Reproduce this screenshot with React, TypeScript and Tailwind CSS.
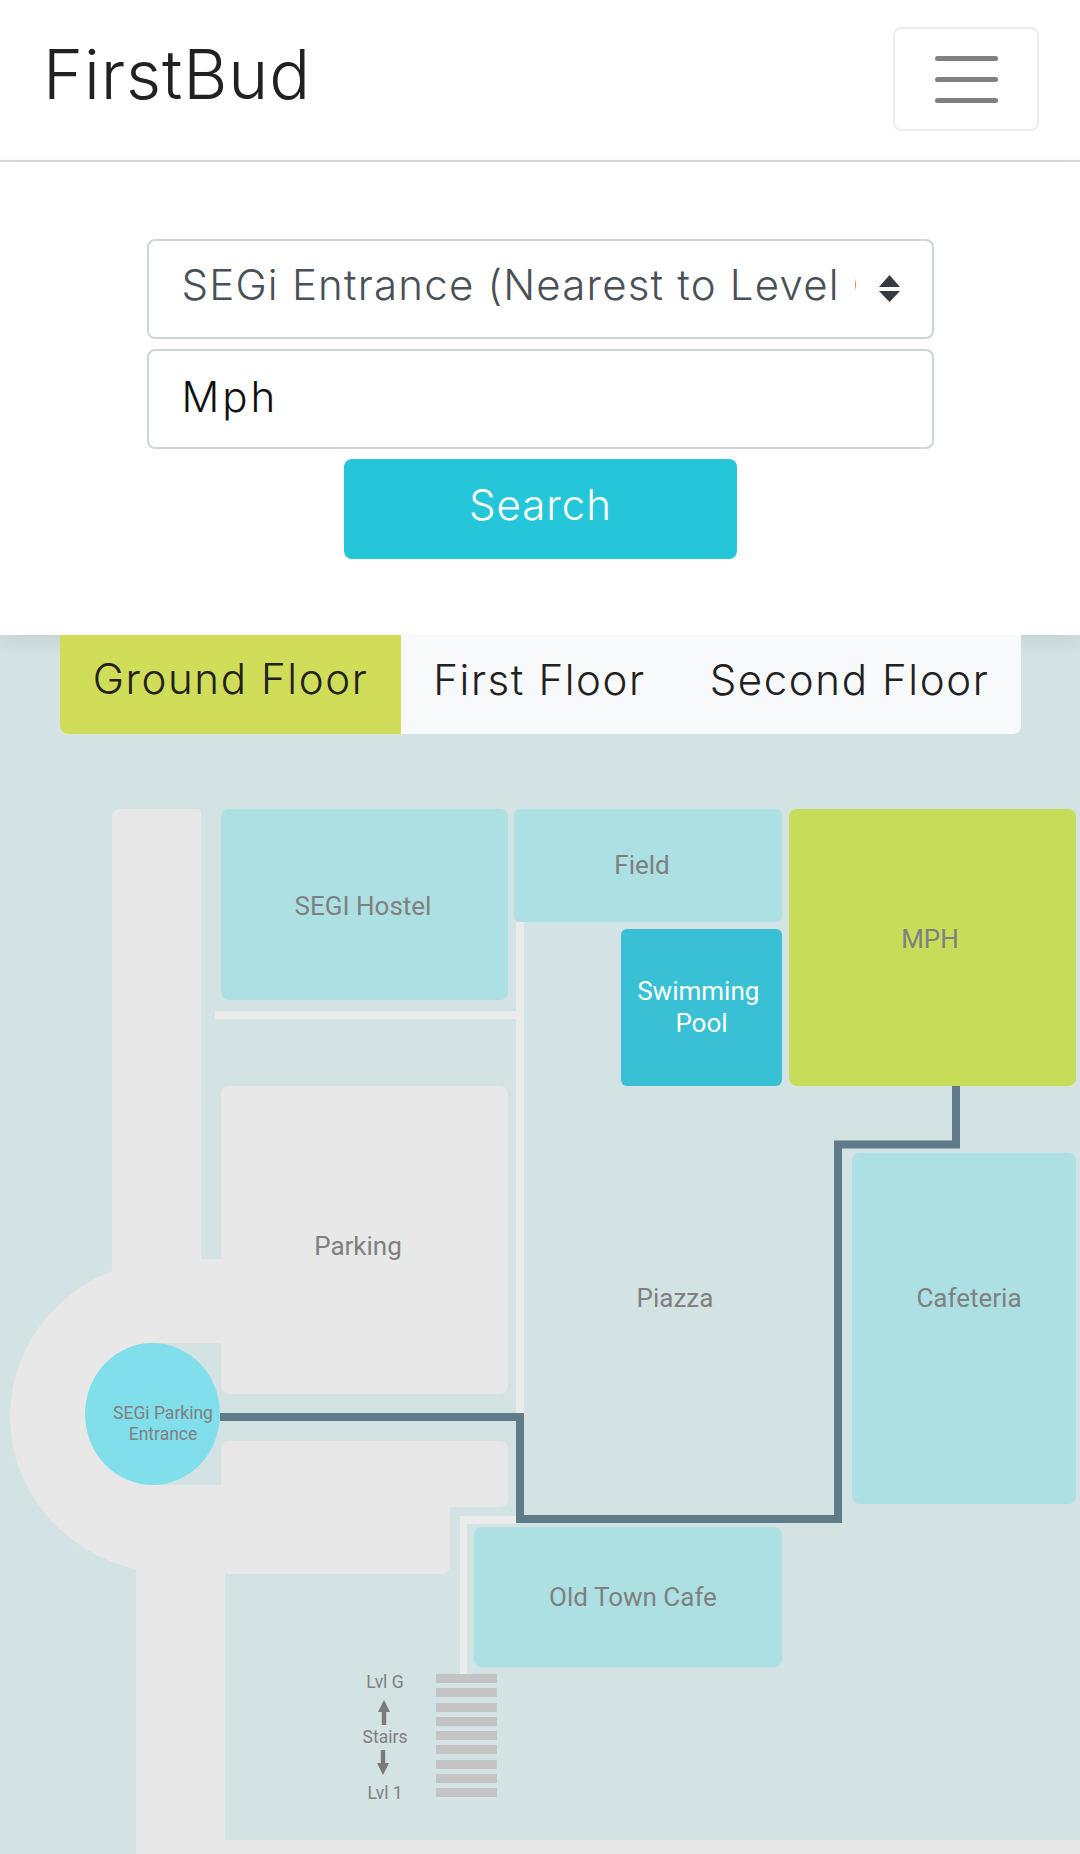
import { useState } from "react";

const stairBars = [0, 1, 2, 3, 4, 5, 6, 7, 8];

function Building({ className, children }: { className: string; children: React.ReactNode }) {
  return (
    <div className={`absolute flex items-center justify-center text-center text-[26px] text-[#808080] font-['Roboto',sans-serif] ${className}`}>
      {children}
    </div>
  );
}

function StairsLegend() {
  return (
    <div className="absolute left-[355px] top-[1037px] w-[60px] flex flex-col items-center text-[17.5px] leading-[20px] text-[#808080] font-['Roboto',sans-serif]">
      <div>Lvl G</div>
      <svg className="mt-[8px] mr-[2px]" width="18" height="26" viewBox="0 0 18 26" fill="#7a7a7a">
        <path d="M9 0 L15 12 L11.2 12 L11.2 25 L6.8 25 L6.8 12 L3 12 Z" />
      </svg>
      <div className="mt-[1px]">Stairs</div>
      <svg className="mt-[3px] mr-[4px]" width="18" height="26" viewBox="0 0 18 26" fill="#7a7a7a">
        <path d="M9 25 L15 13 L11.2 13 L11.2 0 L6.8 0 L6.8 13 L3 13 Z" />
      </svg>
      <div className="mt-[7px]">Lvl 1</div>
    </div>
  );
}

function FloorMap() {
  return (
    <>
      {/* roads */}
      <div className="absolute left-[112px] top-[174px] w-[89px] h-[461px] bg-[#e8e8e8] rounded-tl-lg rounded-tr-sm" />
      <div className="absolute left-[10px] top-[624px] w-[211px] h-[315px] bg-[#e8e8e8] rounded-[165px_0_0_165px/157px_0_0_157px]" />
      <div className="absolute left-[221px] top-[806px] w-[287px] h-[66px] bg-[#e8e8e8] rounded-lg" />
      <div className="absolute left-[221px] top-[806px] w-[229px] h-[133px] bg-[#e8e8e8] rounded-lg" />
      <div className="absolute left-[152px] top-[708px] w-[69px] h-[142px] bg-[#d3e2e3]" />
      <div className="absolute left-[136px] top-[935px] w-[89px] h-[284px] bg-[#e8e8e8]" />
      <div className="absolute left-[225px] top-[1205px] w-[855px] h-[14px] bg-[#e8e8e8]" />

      {/* walkways */}
      <div className="absolute left-[215px] top-[376px] w-[302px] h-[8px] bg-[#ebebeb]" />
      <div className="absolute left-[516px] top-[287px] w-[8px] h-[492px] bg-[#ebebeb]" />
      <div className="absolute left-[460px] top-[881px] w-[56px] h-[8px] bg-[#ebebeb]" />
      <div className="absolute left-[460px] top-[881px] w-[7px] h-[158px] bg-[#ebebeb]" />

      {/* buildings */}
      <Building className="left-[221px] top-[174px] w-[287px] h-[191px] pr-[3px] pt-[3px] bg-[#ade0e2] rounded-lg">SEGI Hostel</Building>
      <Building className="left-[514px] top-[174px] w-[268px] h-[113px] pr-[12px] bg-[#ade0e2] rounded-md">Field</Building>
      <Building className="left-[789px] top-[174px] w-[287px] h-[277px] pr-[5px] pb-[17px] bg-[#c7dd59] rounded-lg">MPH</Building>
      <Building className="left-[621px] top-[294px] w-[161px] h-[157px] pb-[2px] leading-[32px] !text-white bg-[#39c0d4] rounded-md">
        <div>
          Swimming{"\u00a0"}
          <br />
          Pool
        </div>
      </Building>
      <Building className="left-[221px] top-[451px] w-[287px] h-[308px] pr-[13px] pt-[13px] bg-[#e8e8e8] rounded-lg">Parking</Building>
      <Building className="left-[852px] top-[518px] w-[224px] h-[351px] pl-[10px] pb-[61px] bg-[#ade0e2] rounded-lg">Cafeteria</Building>
      <Building className="left-[474px] top-[892px] w-[308px] h-[140px] pl-[10px] bg-[#ade0e2] rounded-lg">Old Town Cafe</Building>

      {/* route */}
      <svg className="absolute left-0 top-0" width="1080" height="1219" fill="none">
        <polyline
          points="220,782 520,782 520,884 838,884 838,509.5 956,509.5 956,451"
          stroke="#5f7b8a"
          strokeWidth="8"
        />
      </svg>

      <Building className="left-[85px] top-[708px] w-[135px] h-[142px] pl-[21px] pt-[19px] !text-[17.5px] leading-[21px] bg-[#80dfeb] rounded-[50%]">
        <div className="whitespace-nowrap">
          SEGi Parking
          <br />
          Entrance
        </div>
      </Building>
      <Building className="left-[600px] top-[645px] w-[150px] h-[36px]">Piazza</Building>

      {/* stairs */}
      <div className="absolute left-[436px] top-[1039px] w-[61px] h-[123px] flex flex-col justify-between">
        {stairBars.map((bar) => (
          <div key={bar} className="h-[9px] bg-[#c4c4c4]" />
        ))}
      </div>
      <StairsLegend />
    </>
  );
}

export default function App() {
  const [start, setStart] = useState("SEGi Entrance (Nearest to Level G)");
  const [destination, setDestination] = useState("Mph");

  return (
    <div className="w-[1080px] h-[1854px] overflow-hidden bg-white font-['Inter','Liberation_Sans',sans-serif]">
      <header className="h-[162px] border-b-2 border-[#d8d8da] flex items-start justify-between pl-[43px] pr-[41px]">
        <div className="text-[68px] leading-none mt-[40px] font-light text-[#212121] tracking-[0.9px]">FirstBud</div>
        <button className="mt-[27px] w-[146px] h-[104px] border-2 border-[#ececec] rounded-lg flex flex-col items-center justify-center gap-[16px]">
          <span className="block w-[63px] h-[5px] rounded bg-[#808080]" />
          <span className="block w-[63px] h-[5px] rounded bg-[#808080]" />
          <span className="block w-[63px] h-[5px] rounded bg-[#808080]" />
        </button>
      </header>

      <section className="relative z-10 h-[473px] bg-white shadow-[0_6px_20px_rgba(0,0,0,0.08)] pt-[77px] flex flex-col items-center">
        <div className="relative w-[787px]">
          <select
            value={start}
            onChange={(e) => setStart(e.target.value)}
            className="appearance-none w-full h-[100px] border-2 border-[#cfd3dc] rounded-lg bg-white pl-[33px] pr-[76px] pb-[10px] text-[42px] font-light tracking-[1.2px] text-[#495057]"
          >
            <option>SEGi Entrance (Nearest to Level G)</option>
          </select>
          <svg className="absolute left-[732px] top-[36px]" width="21" height="27" viewBox="0 0 21 27" fill="#343a40">
            <path d="M10.5 0 L21 12 L0 12 Z M0 16 L21 16 L10.5 27 Z" />
          </svg>
        </div>
        <input
          value={destination}
          onChange={(e) => setDestination(e.target.value)}
          className="mt-[10px] w-[787px] h-[100px] border-2 border-[#cfd3dc] rounded-lg pl-[33px] pb-[6px] text-[42px] font-light tracking-[3px] text-[#111111] outline-none"
        />
        <button className="mt-[10px] ml-[1px] w-[393px] h-[100px] pb-[10px] rounded-lg bg-[#26c6da] text-white text-[42px] font-light tracking-[1px]">Search</button>
      </section>

      <main className="relative h-[1219px] bg-[#d3e2e3]">
        <FloorMap />
        <nav className="relative z-10 ml-[60px] w-[961px] h-[99px] flex rounded-b-lg overflow-hidden bg-[#f8f9fa] text-[#212121] text-[42px] font-light tracking-[1.6px]">
          <div className="w-[341px] pb-[13px] flex items-center justify-center bg-[#d0dd58]">Ground Floor</div>
          <div className="w-[277px] pb-[10px] flex items-center justify-center">First Floor</div>
          <div className="flex-1 pb-[10px] flex items-center justify-center">Second Floor</div>
        </nav>
      </main>
    </div>
  );
}
